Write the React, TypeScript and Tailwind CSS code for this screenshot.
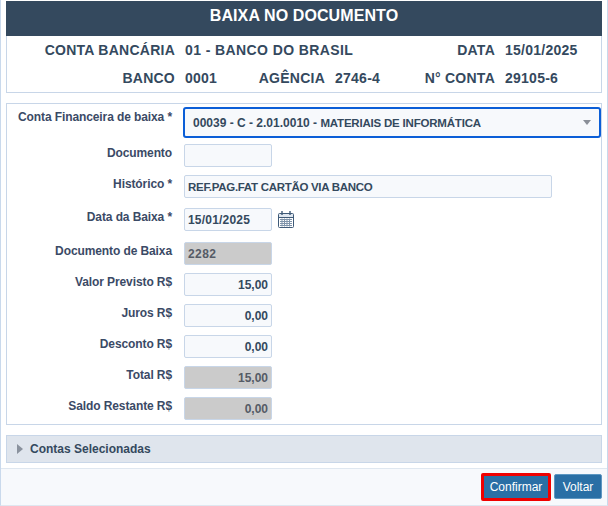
const font = { fontFamily: '"Liberation Sans", Arial, sans-serif' };

function Row({ label, mt, children }: { label: string; mt: string; children: React.ReactNode }) {
  return (
    <div className={`flex ${mt}`}>
      <div className="w-[165px] shrink-0 pt-[1px] pr-0 text-right text-[12px] leading-[17px] font-bold tracking-[-0.1px] text-[#3b4a66]">{label}</div>
      <div className="ml-[12px] flex items-center">{children}</div>
    </div>
  );
}

function Field({ value = "", right, readOnly, w = "w-[88px]", extra = "text-[12px]" }: { value?: string; right?: boolean; readOnly?: boolean; w?: string; extra?: string }) {
  return (
    <div
      className={`${w} h-[23px] rounded-[2px] border border-[#c8d6e8] px-[3px] leading-[22px] font-bold ${extra} ${right ? "text-right" : "text-left"} ${readOnly ? "bg-[#cbcbcb] text-[#555b66]" : "bg-[#f7f9fc] text-[#34495e]"}`}
    >
      {value}
    </div>
  );
}

function Calendar() {
  return (
    <svg width="18" height="19" viewBox="0 0 18 19" className="ml-[5px]" fill="none">
      <rect x="1.5" y="3.5" width="15" height="14" rx="1" fill="#fff" stroke="#3f5a78" />
      <rect x="2" y="4" width="14" height="3" fill="#dfe7f0" />
      <path d="M1.5 7.5h15" stroke="#3f5a78" />
      <path d="M5 1v4M13 1v4" stroke="#3f5a78" strokeWidth="1.4" />
      <path d="M3 9.5h12M3 11.5h12M3 13.5h12M3 15.5h12M5 8.5v8M7.5 8.5v8M10 8.5v8M12.5 8.5v8" stroke="#7f93aa" strokeWidth="1" />
    </svg>
  );
}

function Info({ children, label, className = "" }: { children: React.ReactNode; label?: boolean; className?: string }) {
  return <div className={`${label ? "text-right" : "text-left"} whitespace-nowrap ${className}`}>{children}</div>;
}

export default function App() {
  return (
    <div style={font} className="flex h-[506px] w-[608px] flex-col overflow-hidden border-x border-b border-x-[#c9d9ec] border-b-[#dfe7f0] bg-white">
      <div className="mx-[5px] mt-[1px] h-[92px] shrink-0 border border-t-0 border-[#c8d6e8]">
        <div className="-mx-px h-[35px] bg-[#34495e] text-center text-[16px] leading-[29px] font-bold tracking-[0.1px] text-white">BAIXA NO DOCUMENTO</div>
        <div className="grid grid-cols-[168px_60px_70px_77px_73px_90px] gap-x-[10px] text-[14px] leading-[28px] font-bold tracking-[0.25px] text-[#34495e]">
          <Info label>CONTA BANCÁRIA</Info>
          <Info className="col-span-3 tracking-[0.4px]">01 - BANCO DO BRASIL</Info>
          <Info label>DATA</Info>
          <Info>15/01/2025</Info>
          <Info label>BANCO</Info>
          <Info>0001</Info>
          <Info label>AGÊNCIA</Info>
          <Info>2746-4</Info>
          <Info label>N° CONTA</Info>
          <Info>29105-6</Info>
        </div>
      </div>

      <div className="mx-[5px] mt-[10px] h-[322px] shrink-0 border border-[#c8d6e8] pt-[3px]">
        <div className="flex">
          <div className="w-[165px] shrink-0 pt-[2px] text-right text-[12px] leading-[17px] font-bold tracking-[-0.1px] text-[#3b4a66]">Conta Financeira de baixa *</div>
          <div className="relative ml-[11px] h-[31px] w-[418px] rounded-[3px] border-2 border-[#0b5ed7] bg-[#f7f9fc] pl-[8px] text-[12px] leading-[29px] font-bold text-[#34495e]">
            00039 - C - 2.01.0010 - <span className="text-[11.5px] tracking-[-0.2px]">MATERIAIS DE INFORMÁTICA</span>
            <span className="absolute top-[11px] right-[8px] h-0 w-0 border-x-[4px] border-t-[5px] border-x-transparent border-t-[#8a8f98]" />
          </div>
        </div>
        <Row label="Documento" mt="mt-[6px]"><Field /></Row>
        <Row label="Histórico *" mt="mt-[8px]"><Field value="REF.PAG.FAT CARTÃO VIA BANCO" w="w-[368px]" extra="text-[11.5px] tracking-[-0.3px]" /></Row>
        <Row label="Data da Baixa *" mt="mt-[10px]"><Field value="15/01/2025" extra="text-[12px] tracking-[0.2px]" /><Calendar /></Row>
        <Row label="Documento de Baixa" mt="mt-[11px]"><Field value="2282" readOnly extra="text-[12px] tracking-[0.4px]" /></Row>
        <Row label="Valor Previsto R$" mt="mt-[8px]"><Field value="15,00" right /></Row>
        <Row label="Juros R$" mt="mt-[8px]"><Field value="0,00" right /></Row>
        <Row label="Desconto R$" mt="mt-[8px]"><Field value="0,00" right /></Row>
        <Row label="Total R$" mt="mt-[8px]"><Field value="15,00" right readOnly /></Row>
        <Row label="Saldo Restante R$" mt="mt-[8px]"><Field value="0,00" right readOnly /></Row>
      </div>

      <div className="mx-[5px] mt-[10px] flex h-[28px] shrink-0 items-center border border-[#c8d6e8] bg-[#dfe5ed] pl-[10px]">
        <span className="h-0 w-0 border-y-[5px] border-l-[6px] border-y-transparent border-l-[#8a929e]" />
        <span className="ml-[7px] text-[12px] font-bold text-[#34495e]">Contas Selecionadas</span>
      </div>

      <div className="mt-[5px] flex flex-1 items-center justify-end gap-[3px] border-t border-[#dfe7f0] bg-[#f7f9fc] pr-[5px] pb-[1px]">
        <button className="h-[28px] w-[70px] rounded-[2px] border-[3px] border-[#f00000] bg-[#2a6fa5] text-[12px] text-white">Confirmar</button>
        <button className="h-[25px] w-[48px] rounded-[2px] border border-[#5d97c2] bg-[#2a6fa5] text-[12px] text-white">Voltar</button>
      </div>
    </div>
  );
}
